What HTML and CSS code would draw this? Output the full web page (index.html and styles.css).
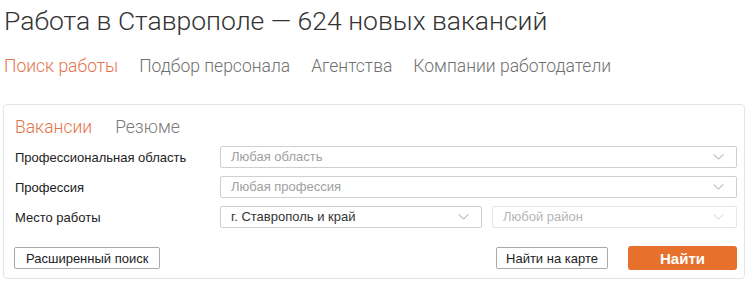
FILE: index.html
```html
<!DOCTYPE html>
<html lang="ru">
<head>
<meta charset="utf-8">
<link rel="stylesheet" href="styles.css">
</head>
<body>
<div class="page">
  <h1 class="title">Работа в Ставрополе — 624 новых вакансий</h1>
  <nav class="nav">
    <a class="nav-item active">Поиск работы</a>
    <a class="nav-item">Подбор персонала</a>
    <a class="nav-item">Агентства</a>
    <a class="nav-item">Компании работодатели</a>
  </nav>
  <div class="panel">
    <div class="tabs">
      <span class="tab active">Вакансии</span>
      <span class="tab">Резюме</span>
    </div>
    <div class="form">
      <div class="row">
        <div class="label">Профессиональная область</div>
        <div class="fields">
          <div class="select placeholder full">Любая область<svg class="chev" viewBox="0 0 12 7"><path d="M0.5 0.5 L6 6 L11.5 0.5"/></svg></div>
        </div>
      </div>
      <div class="row">
        <div class="label">Профессия</div>
        <div class="fields">
          <div class="select placeholder full">Любая профессия<svg class="chev" viewBox="0 0 12 7"><path d="M0.5 0.5 L6 6 L11.5 0.5"/></svg></div>
        </div>
      </div>
      <div class="row">
        <div class="label">Место работы</div>
        <div class="fields split">
          <div class="select city">г. Ставрополь и край<svg class="chev" viewBox="0 0 12 7"><path d="M0.5 0.5 L6 6 L11.5 0.5"/></svg></div>
          <div class="select disabled district">Любой район<svg class="chev light" viewBox="0 0 12 7"><path d="M0.5 0.5 L6 6 L11.5 0.5"/></svg></div>
        </div>
      </div>
    </div>
    <div class="actions">
      <button class="btn">Расширенный поиск</button>
      <div class="right-actions">
        <button class="btn map">Найти на карте</button>
        <button class="btn primary">Найти</button>
      </div>
    </div>
  </div>
</div>
</body>
</html>
```

FILE: styles.css
```css
html, body {
  margin: 0;
  padding: 0;
  background: #ffffff;
}
.page {
  width: 743px;
  padding: 0 0 0 3px;
  font-family: "Liberation Sans", Arial, sans-serif;
}
.title {
  margin: 0;
  padding: 4px 0 0 1px;
  font-family: Roboto, "Liberation Sans", sans-serif;
  font-weight: 300;
  font-size: 26.5px;
  line-height: 34px;
  color: #333333;
}
.nav {
  display: flex;
  gap: 21px;
  margin-top: 17px;
  padding-left: 1px;
  font-family: Roboto, "Liberation Sans", sans-serif;
  font-weight: 300;
  font-size: 17.5px;
  line-height: 22px;
}
.nav-item {
  color: #707070;
}
.nav-item.active {
  color: #e3734a;
}
.panel {
  margin-top: 27px;
  width: 742px;
  box-sizing: border-box;
  border: 1px solid #e4e4e4;
  border-radius: 4px;
  padding: 11px 7px 8px 11px;
}
.tabs {
  display: flex;
  gap: 23px;
  font-family: Roboto, "Liberation Sans", sans-serif;
  font-weight: 300;
  font-size: 17.5px;
  line-height: 22px;
}
.tab {
  color: #7a7a7a;
}
.tab.active {
  color: #e3734a;
}
.form {
  display: flex;
  flex-direction: column;
  gap: 8px;
  margin-top: 8px;
}
.row {
  display: flex;
  align-items: center;
}
.label {
  width: 205px;
  flex: none;
  font-size: 13px;
  color: #222222;
}
.fields {
  flex: 1;
  display: flex;
  gap: 10px;
}
.select {
  position: relative;
  box-sizing: border-box;
  height: 22px;
  border: 1px solid #cfcfcf;
  border-radius: 2px;
  padding-left: 10px;
  font-size: 13px;
  line-height: 20px;
  color: #333333;
  background: #ffffff;
}
.select.full {
  flex: 1;
}
.select.placeholder {
  color: #a0a0a0;
}
.select.city {
  width: 262px;
  flex: none;
}
.select.district {
  flex: 1;
}
.select.disabled {
  border-color: #e6e6e6;
  color: #b5b5b5;
}
.chev {
  position: absolute;
  right: 12px;
  top: 7px;
  width: 11px;
  height: 6px;
  fill: none;
  stroke: #8c8c8c;
  stroke-width: 1;
}
.chev.light {
  stroke: #c8c8c8;
}
.actions {
  display: flex;
  justify-content: space-between;
  align-items: center;
  margin-top: 18px;
}
.right-actions {
  display: flex;
  align-items: center;
  gap: 20px;
}
.btn {
  box-sizing: border-box;
  height: 22px;
  padding: 0 11px;
  border: 1px solid #a9a9a9;
  border-radius: 2px;
  background: #ffffff;
  font-family: "Liberation Sans", Arial, sans-serif;
  font-size: 13px;
  color: #222222;
  margin: 0;
}
.btn.map {
  width: 112px;
  padding: 0;
}
.actions > .btn {
  margin-left: -1px;
}
.btn.primary {
  width: 109px;
  height: 24px;
  border: none;
  border-radius: 3px;
  background: #e8702d;
  color: #ffffff;
  font-size: 15px;
  font-weight: bold;
}
```
